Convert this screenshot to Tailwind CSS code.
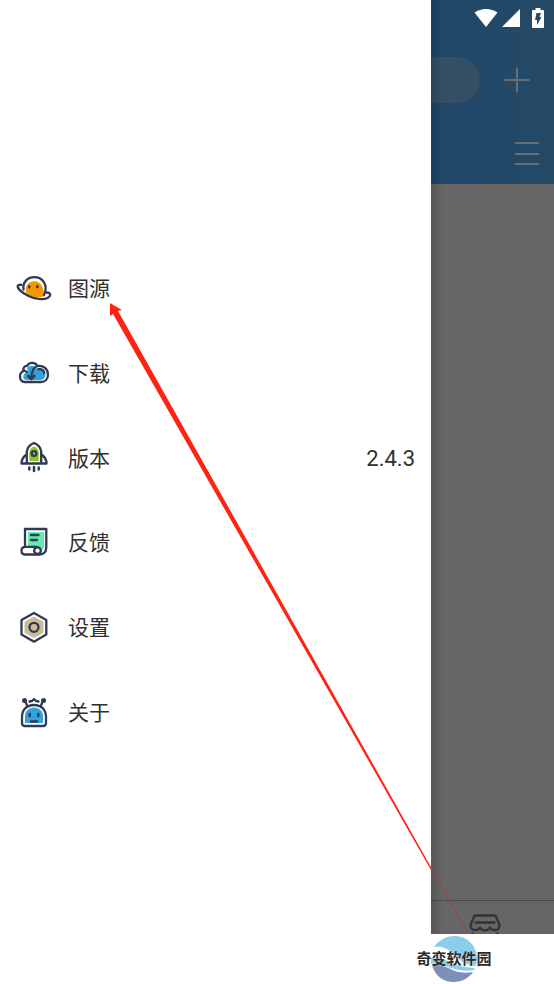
<!DOCTYPE html>
<html lang="zh-CN">

<head>
    <meta charset="UTF-8">
    <meta name="viewport" content="width=device-width, initial-scale=1.0">
    <title>图源</title>
    <script src="https://cdn.jsdelivr.net/npm/@tailwindcss/browser@4"></script>
</head>

<body class="relative min-h-screen bg-white overflow-x-hidden font-['Roboto','Noto_Sans_CJK_SC',sans-serif] text-[#303030]">
    <div class="flex min-h-[934px]">
        <!-- Drawer -->
        <nav class="flex-1 pt-[246px]">
            <ul class="grid auto-rows-fr h-[508px] text-[21px] leading-8">
                <li class="flex items-center">
                    <a href="#source" class="flex items-center flex-1 gap-4 px-4">
                        <svg class="size-9" viewBox="0 0 36 36" fill="none" stroke="#303a54" stroke-width="2.300" stroke-linecap="round" stroke-linejoin="round">
                            <path d="M10 22.500C8.500 16 12.500 11.300 18.500 11.300C25 11.300 28.500 18 27.500 26.500C21 28.500 14 26.500 10 22.500Z" fill="#f39800" stroke="none" />
                            <path d="M7.500 19.500C6.500 11.500 12 7.200 18.500 7.200C25.500 7.200 30.500 13 29.500 20C29.200 22 28.800 23.500 28 25" />
                            <path d="M5.500 14.800C2.500 14.600 1.200 15.500 1.800 17.200C3 21 10 25.500 17.500 27.800C24 29.500 30.500 29.500 33 27C35 25 34.500 22.600 30.500 22.500" />
                            <ellipse cx="13.200" cy="16.800" rx="1.300" ry="1.900" fill="#303a54" stroke="none" />
                            <ellipse cx="21.300" cy="16.600" rx="1.300" ry="1.900" fill="#303a54" stroke="none" />
                        </svg>
                        <span class="pt-[2px]">图源</span>
                    </a>
                </li>
                <li class="flex items-center">
                    <a href="#download" class="flex items-center flex-1 gap-4 px-4">
                        <svg class="size-9" viewBox="0 0 36 36" fill="none" stroke="#303a54" stroke-width="2.300" stroke-linecap="round" stroke-linejoin="round">
                            <path d="M11 13C14 9.500 19 10.500 20 13.500C25 11.500 30 15 29.500 20C29 23.500 27 25 24 25H11C7.500 25 6.500 22 8 19.500C9 17.500 11 17 12.500 17.500Z" fill="#2fa3dc" stroke="none" />
                            <path d="M9 27C5.500 27 4 24.500 4 21.500C4 18.500 5.500 16.700 7.500 16C7 12.500 8.500 10.700 11 10.800C12.500 8.500 15 7.500 17.500 8C19.500 8.300 20.800 9.500 21.500 11C27.500 10 32 14 32 19.500C32 24 29 27 25 27Z" />
                            <path d="M7.500 16C8.800 15.600 10 16 11 17M21.500 11C17.500 12 15.500 15.500 15.300 23.500" />
                            <path d="M12.300 21L15.300 24L18.300 21" stroke-width="2.700" />
                            <path d="M22.500 14.200C25.500 14 27.800 15.500 28.200 18" />
                        </svg>
                        <span class="pt-[2px]">下载</span>
                    </a>
                </li>
                <li class="flex items-center">
                    <a href="#version" class="flex items-center flex-1 gap-4 px-4">
                        <svg class="size-9" viewBox="0 0 36 36" fill="none" stroke="#303a54" stroke-width="2.300" stroke-linecap="round" stroke-linejoin="round">
                            <path d="M13.300 21V13C13.300 10 15 7.500 18 6.500C21 7.500 22.700 10 22.700 13V21Z" fill="#8fc31f" stroke="none" />
                            <path d="M10.800 23V11.500C11.500 7.500 14 4.500 18 3C22 4.500 24.500 7.500 25.200 11.500V23" />
                            <path d="M10.500 14.500C7 17 5.500 19.500 5.500 23.500H30.500C30.500 19.500 29 17 25.500 14.500" />
                            <circle cx="18" cy="13.500" r="2.400" />
                            <path d="M13.300 27.500V29.500M18 27V31M22.700 27.500V29.500" stroke-width="2.500" />
                        </svg>
                        <span class="pt-[2px]">版本</span>
                        <span class="ml-auto pt-[2px] text-[22px]">2.4.3</span>
                    </a>
                </li>
                <li class="flex items-center">
                    <a href="#feedback" class="flex items-center flex-1 gap-4 px-4">
                        <svg class="size-9" viewBox="0 0 36 36" fill="none" stroke="#303a54" stroke-width="2.300" stroke-linecap="round" stroke-linejoin="round">
                            <path d="M12 8H28V24L25 27L22 23H12Z" fill="#5eedaa" stroke="none" />
                            <path d="M9 22V5H30.300V23C30.300 28 27.500 30.500 23.500 30.500H9.500C7 30.500 5.500 29 5.500 26.700C5.500 24.300 7 22.800 9.500 22.800H21" />
                            <circle cx="21.500" cy="26.700" r="3.300" fill="#fff" />
                            <path d="M15 11H22.500M15 16H21" />
                        </svg>
                        <span class="pt-[2px]">反馈</span>
                    </a>
                </li>
                <li class="flex items-center">
                    <a href="#settings" class="flex items-center flex-1 gap-4 px-4">
                        <svg class="size-9" viewBox="0 0 36 36" fill="none" stroke="#303a54" stroke-width="2.300" stroke-linejoin="round">
                            <path d="M18 7.500L27.500 12.700V23.700L18 29L8.500 23.700V12.700Z" fill="#cdbb96" stroke="none" />
                            <path d="M18 4L30.300 11V25.500L18 32.700L5.500 25.500V11Z" />
                            <circle cx="18" cy="18.300" r="4.500" />
                        </svg>
                        <span class="pt-[2px]">设置</span>
                    </a>
                </li>
                <li class="flex items-center">
                    <a href="#about" class="flex items-center flex-1 gap-4 px-4">
                        <svg class="size-9" viewBox="0 0 36 36" fill="none" stroke="#303a54" stroke-width="2.300" stroke-linecap="round" stroke-linejoin="round">
                            <path d="M9 29V22C9 17 13 13.500 18 13.500C23 13.500 27 17 27 22V29Z" fill="#2fa3dc" stroke="none" />
                            <path d="M6 29V23C6 15.500 11 11 18 11C25 11 30 15.500 30 23V29C30 31 29 32 27 32H9C7 32 6 31 6 29Z" />
                            <path d="M9 7L11.500 12.500M27 7L24.500 12.500" />
                            <circle cx="8.500" cy="6.500" r="2.500" fill="#303a54" stroke="none" />
                            <circle cx="27.500" cy="6.500" r="2.500" fill="#303a54" stroke="none" />
                            <path d="M13.500 7.500L16 7L18 5L20 7L22.500 7.500" />
                            <path d="M13.700 20V22M22.300 20V22" stroke-width="2.600" />
                            <path d="M15 27.500H21" />
                        </svg>
                        <span class="pt-[2px]">关于</span>
                    </a>
                </li>
            </ul>
        </nav>

        <!-- Dimmed page behind the drawer -->
        <main class="relative flex flex-col w-[123px] bg-[#666666] overflow-hidden">
            <div class="absolute inset-y-0 left-0 w-3 bg-gradient-to-r from-black/15 to-transparent"></div>
            <header class="h-[184px] bg-gradient-to-r from-[#1f4769] to-[#254a66]">
                <div class="flex justify-end items-center gap-2 h-9 pr-[10px]">
                    <svg class="w-6 h-5" viewBox="0 0 24 20" fill="#fff">
                        <path d="M0.500 4.500C7 -0.300 17 -0.300 23.500 4.500L12 19Z" />
                    </svg>
                    <svg class="-ml-1 w-[18px] h-5" viewBox="0 0 18 20" fill="#fff">
                        <path d="M18 1V19H0Z" />
                    </svg>
                    <svg class="ml-1 w-3 h-5" viewBox="0 0 12 20">
                        <path d="M3.500 0H8.500V2H11Q12 2 12 3V19Q12 20 11 20H1Q0 20 0 19V3Q0 2 1 2H3.500Z" fill="#fff" />
                        <path d="M4.500 5H9L7.500 9H9.500L5 17V12H3Z" fill="#234967" />
                    </svg>
                </div>
                <div class="flex items-center justify-between mt-[21px] pr-6">
                    <div class="w-[49px] h-[46px] rounded-r-full bg-[#354f64]"></div>
                    <button aria-label="添加">
                        <svg class="size-[26px]" viewBox="0 0 26 26" stroke="#6e6e6e" stroke-width="2">
                            <path d="M0.500 13H25.500M13 0.500V25.500" />
                        </svg>
                    </button>
                </div>
                <div class="flex justify-end mt-[38px] pr-[15px]">
                    <button aria-label="菜单">
                        <svg class="w-6 h-[26px]" viewBox="0 0 24 26" stroke="#6e6e6e" stroke-width="2">
                            <path d="M0 2H24M0 13H24M0 23H24" />
                        </svg>
                    </button>
                </div>
            </header>
            <div class="flex-1"></div>
            <footer class="flex justify-center h-[34px] pt-3 pr-4 border-t border-[#484848] overflow-hidden">
                <svg class="w-8 h-[30px]" viewBox="0 0 32 30" fill="none" stroke="#333" stroke-width="2.300" stroke-linejoin="round" stroke-linecap="round">
                    <path d="M5.500 2.500H26.500L30.500 12C30.500 18 23.500 18.500 21 14.500C18.500 18.500 13.500 18.500 11 14.500C8.500 18.500 1.500 18 1.500 12Z" />
                    <path d="M6.500 9.500H25.500M3.500 20.500V29H28.500V20.500" />
                </svg>
            </footer>
        </main>
    </div>

    <!-- Pointer to the first entry -->
    <svg class="absolute top-0 left-0 w-[554px] h-[984px] pointer-events-none" viewBox="0 0 554 984" fill="#ff2314">
        <path d="M110 303L122 310L118 311L432 869L431 870L113 314L110 316Z" />
        <path d="M431.500 869L467 932" fill="none" stroke="#b8352c" stroke-width="0.800" />
    </svg>

    <!-- Site mark -->
    <div class="flex justify-end h-[50px] pr-[62px]">
        <div class="relative flex items-center justify-center w-[76px] h-[50px]">
            <svg class="size-12" viewBox="0 0 48 48">
                <path d="M4 12C9 5 16 1 24 1C38 1 47 11 47 24L46 31C36 30 31 27 25 20C18 13 11 11 4 12Z" fill="#8ccdec" />
                <path d="M2 30C12 29 17 33 25 36C31 38 38 38 43 37C39 43 32 47 24 47C13 47 5 41 2 30Z" fill="#7f8fb8" />
                <path d="M1 23C12 19 20 32 45 33L44 35C34 37 22 34 15 31C10 29 5 28 1 29Z" fill="#8ccdec" />
            </svg>
            <span class="absolute inset-0 text-center text-[15px] leading-[50px] font-bold whitespace-nowrap text-[#2b2b2b] text-shadow-[0_0_1px_#fff]">奇变软件园</span>
        </div>
    </div>
</body>

</html>
